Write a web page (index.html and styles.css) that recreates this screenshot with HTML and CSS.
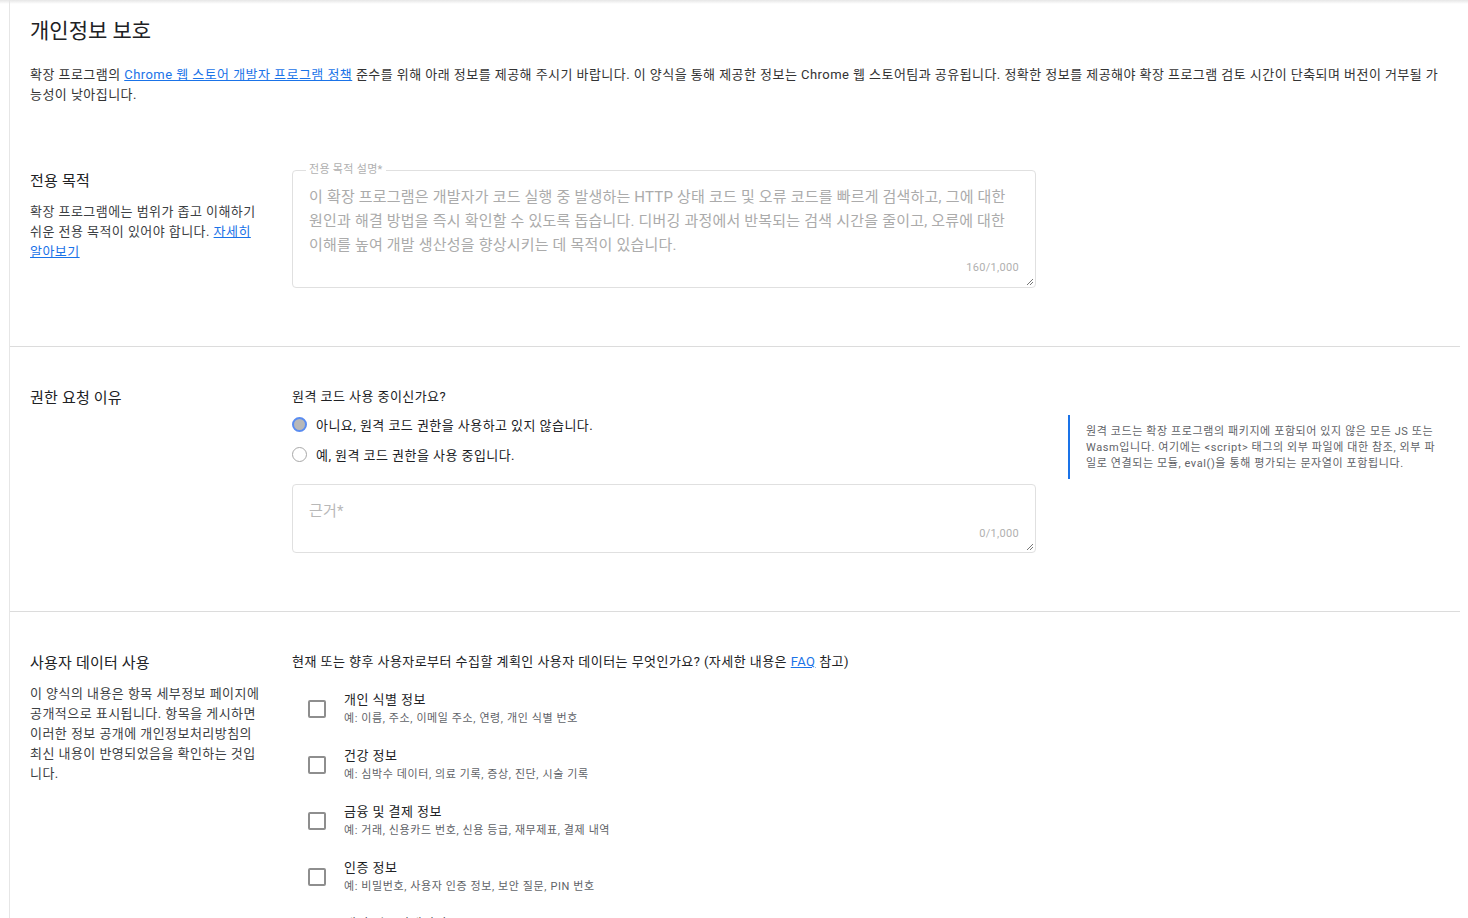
FILE: index.html
```html
<!DOCTYPE html>
<html lang="ko">
<head>
    <meta charset="UTF-8">
    <meta name="viewport" content="width=device-width, initial-scale=1.0">
    <title>개인정보 보호</title>
    <link rel="stylesheet" href="styles.css">
</head>
<body>
    <div class="top-shade"></div>
    <div class="page">
        <div class="page-header">
            <h1>개인정보 보호</h1>
            <p class="intro">확장 프로그램의 <a href="#">Chrome 웹 스토어 개발자 프로그램 정책</a> 준수를 위해 아래 정보를 제공해 주시기 바랍니다. 이 양식을 통해 제공한 정보는 Chrome 웹 스토어팀과 공유됩니다. 정확한 정보를 제공해야 확장 프로그램 검토 시간이 단축되며 버전이 거부될 가능성이 낮아집니다.</p>
        </div>

        <section class="section section-first">
            <div class="section-side">
                <h2>전용 목적</h2>
                <p>확장 프로그램에는 범위가 좁고 이해하기 쉬운 전용 목적이 있어야 합니다. <a href="#">자세히 알아보기</a></p>
            </div>
            <div class="section-main">
                <fieldset class="field">
                    <legend>전용 목적 설명*</legend>
                    <div class="field-text">이 확장 프로그램은 개발자가 코드 실행 중 발생하는 HTTP 상태 코드 및 오류 코드를 빠르게 검색하고, 그에 대한 원인과 해결 방법을 즉시 확인할 수 있도록 돕습니다. 디버깅 과정에서 반복되는 검색 시간을 줄이고, 오류에 대한 이해를 높여 개발 생산성을 향상시키는 데 목적이 있습니다.</div>
                    <div class="counter">160/1,000</div>
                    <svg class="grip" width="8" height="8" viewBox="0 0 8 8"><path d="M7 1L1 7M7 4L4 7" stroke="#777" stroke-width="1"/></svg>
                </fieldset>
            </div>
        </section>

        <section class="section">
            <div class="section-side">
                <h2>권한 요청 이유</h2>
            </div>
            <div class="section-main split">
                <div class="main-col">
                    <div class="question">원격 코드 사용 중이신가요?</div>
                    <div class="radio-row">
                        <span class="radio checked"></span>
                        <span>아니요, 원격 코드 권한을 사용하고 있지 않습니다.</span>
                    </div>
                    <div class="radio-row">
                        <span class="radio"></span>
                        <span>예, 원격 코드 권한을 사용 중입니다.</span>
                    </div>
                    <div class="field field-plain">
                        <div class="field-text placeholder">근거*</div>
                        <div class="counter">0/1,000</div>
                        <svg class="grip" width="8" height="8" viewBox="0 0 8 8"><path d="M7 1L1 7M7 4L4 7" stroke="#777" stroke-width="1"/></svg>
                    </div>
                </div>
                <aside class="note">원격 코드는 확장 프로그램의 패키지에 포함되어 있지 않은 모든 JS 또는 Wasm입니다. 여기에는 &lt;script&gt; 태그의 외부 파일에 대한 참조, 외부 파일로 연결되는 모듈, eval()을 통해 평가되는 문자열이 포함됩니다.</aside>
            </div>
        </section>

        <section class="section">
            <div class="section-side">
                <h2>사용자 데이터 사용</h2>
                <p>이 양식의 내용은 항목 세부정보 페이지에 공개적으로 표시됩니다. 항목을 게시하면 이러한 정보 공개에 개인정보처리방침의 최신 내용이 반영되었음을 확인하는 것입니다.</p>
            </div>
            <div class="section-main">
                <div class="question">현재 또는 향후 사용자로부터 수집할 계획인 사용자 데이터는 무엇인가요? (자세한 내용은 <a href="#">FAQ</a> 참고)</div>
                <div class="check-list">
                    <div class="check-item">
                        <span class="checkbox"></span>
                        <div>
                            <div class="check-label">개인 식별 정보</div>
                            <div class="check-sub">예: 이름, 주소, 이메일 주소, 연령, 개인 식별 번호</div>
                        </div>
                    </div>
                    <div class="check-item">
                        <span class="checkbox"></span>
                        <div>
                            <div class="check-label">건강 정보</div>
                            <div class="check-sub">예: 심박수 데이터, 의료 기록, 증상, 진단, 시술 기록</div>
                        </div>
                    </div>
                    <div class="check-item">
                        <span class="checkbox"></span>
                        <div>
                            <div class="check-label">금융 및 결제 정보</div>
                            <div class="check-sub">예: 거래, 신용카드 번호, 신용 등급, 재무제표, 결제 내역</div>
                        </div>
                    </div>
                    <div class="check-item">
                        <span class="checkbox"></span>
                        <div>
                            <div class="check-label">인증 정보</div>
                            <div class="check-sub">예: 비밀번호, 사용자 인증 정보, 보안 질문, PIN 번호</div>
                        </div>
                    </div>
                    <div class="check-item">
                        <span class="checkbox"></span>
                        <div>
                            <div class="check-label">개인 커뮤니케이션</div>
                            <div class="check-sub">예: 이메일, 문자 메시지, 채팅 메시지</div>
                        </div>
                    </div>
                </div>
            </div>
        </section>
    </div>
</body>
</html>
```

FILE: styles.css
```css
* {
    box-sizing: border-box;
}

body {
    margin: 0;
    font-family: Roboto, "Noto Sans CJK KR", sans-serif;
    color: #202124;
    background: #fff;
    letter-spacing: 0.45px;
    overflow: hidden;
}

a {
    color: #1a73e8;
    text-decoration: underline;
}

.top-shade {
    height: 4px;
    margin-bottom: -4px;
    background: linear-gradient(#e6e6e6, rgba(255, 255, 255, 0));
}

.page {
    margin-left: 9px;
    width: 1451px;
    min-height: 100vh;
    border-left: 1px solid #e6e6e6;
}

.page-header {
    padding: 17px 20px 24px 20px;
}

h1 {
    margin: 0;
    font-size: 21px;
    font-weight: 400;
    line-height: 28px;
    letter-spacing: 0;
    color: #202124;
}

.intro {
    margin: 20px 0 0 0;
    font-size: 13px;
    line-height: 20px;
    color: #333;
}

.section {
    display: grid;
    grid-template-columns: 232px 1fr;
    column-gap: 30px;
    padding: 40px 20px 58px 20px;
    border-top: 1px solid #dcdcdc;
}

.section-first {
    border-top: none;
    padding-top: 34px;
}

.section-first h2 {
    margin-top: 7px;
}

h2 {
    margin: 0;
    font-size: 15px;
    font-weight: 400;
    line-height: 22px;
    letter-spacing: 0.2px;
    color: #202124;
}

.section-side p {
    margin: 10px 0 0 0;
    font-size: 13px;
    line-height: 20px;
    color: #3c4043;
}

.section-main {
    min-width: 0;
}

.split {
    display: flex;
    gap: 32px;
}

.main-col {
    width: 744px;
    flex-shrink: 0;
}

.field {
    position: relative;
    width: 744px;
    margin: 0;
    padding: 8px 16px 12px 16px;
    border: 1px solid #e0e0e0;
    border-radius: 4px;
}

.field legend {
    padding: 0 3px;
    margin-left: -3px;
    font-size: 11px;
    line-height: 14px;
    letter-spacing: 0.3px;
    color: #b0b0b0;
}

.field-text {
    font-size: 15px;
    line-height: 24px;
    letter-spacing: 0.2px;
    color: #ababab;
    margin-bottom: 4px;
}

.field-plain {
    margin-top: 20px;
    padding-top: 14px;
    padding-bottom: 11px;
}

.placeholder {
    color: #b8b8b8;
    margin-bottom: 4px;
}

.counter {
    text-align: right;
    font-size: 11px;
    line-height: 14px;
    letter-spacing: 0.3px;
    color: #b0b0b0;
}

.grip {
    position: absolute;
    right: 1px;
    bottom: 1px;
}

.question {
    font-size: 13px;
    line-height: 20px;
    color: #202124;
}

.radio-row {
    display: flex;
    align-items: center;
    gap: 9px;
    height: 20px;
    margin-top: 7px;
    font-size: 13px;
    color: #202124;
}

.radio-row + .radio-row {
    margin-top: 10px;
}

.radio {
    width: 15px;
    height: 15px;
    border-radius: 50%;
    border: 1.5px solid #a8a8a8;
    background: #fff;
    flex-shrink: 0;
}

.radio.checked {
    border: 2px solid #5a8cf0;
    background: #b8b8b8;
}

.note {
    margin-top: 28px;
    align-self: flex-start;
    width: 372px;
    padding: 9px 0 7px 16px;
    border-left: 2px solid #1a73e8;
    font-size: 11px;
    line-height: 16px;
    letter-spacing: 0.6px;
    color: #5f6368;
}

.check-list {
    margin-top: 19px;
    padding-left: 16px;
}

.check-item {
    display: flex;
    align-items: center;
    gap: 18px;
    margin-bottom: 20px;
}

.checkbox {
    width: 18px;
    height: 18px;
    border: 2px solid #8e8e8e;
    border-radius: 2px;
    flex-shrink: 0;
}

.check-label {
    font-size: 13px;
    line-height: 18px;
    color: #202124;
}

.check-sub {
    margin-top: 2px;
    font-size: 11px;
    line-height: 16px;
    letter-spacing: 0.6px;
    color: #5f6368;
}
```
